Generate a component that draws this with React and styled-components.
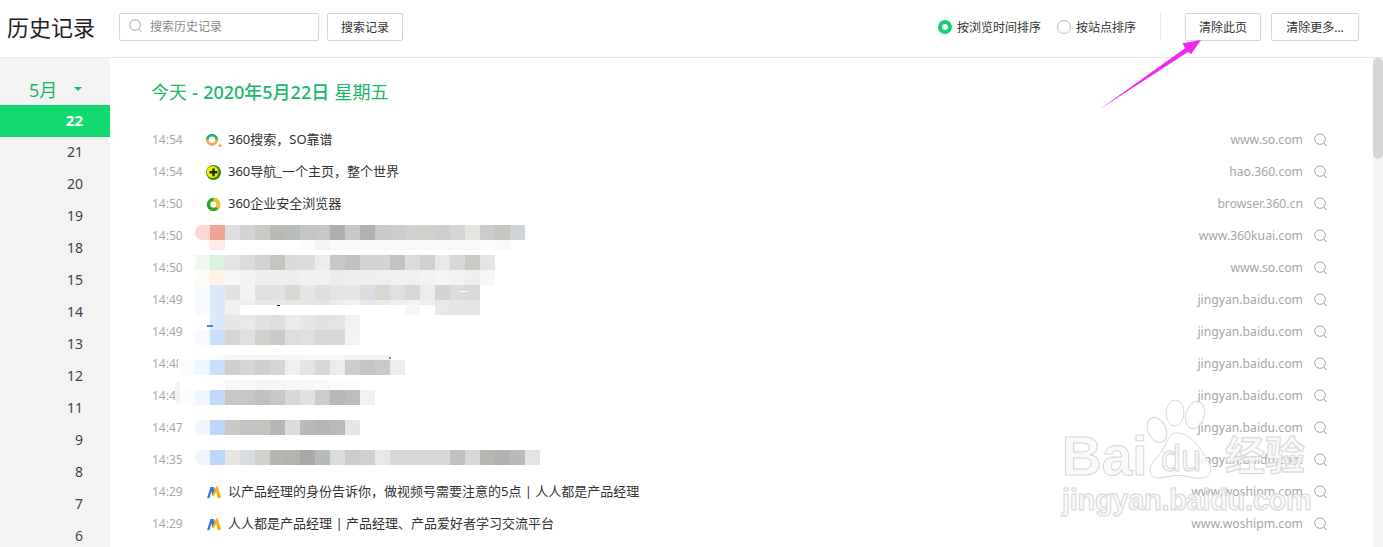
import React from "react";
import styled, { createGlobalStyle } from "styled-components";

const GlobalStyle = createGlobalStyle`
  html, body {
    margin: 0;
    padding: 0;
    height: 100%;
    background: #fff;
    overflow: hidden;
  }
  body {
    font-family: "Noto Sans", "Noto Sans CJK SC", sans-serif;
  }
`;

const Page = styled.div`
  position: relative;
  width: 1383px;
  height: 547px;
  overflow: hidden;
  display: flex;
  flex-direction: column;
`;

const Header = styled.header`
  flex: 0 0 58px;
  box-sizing: border-box;
  display: flex;
  align-items: center;
  padding: 0 24px 3px 7px;
  border-bottom: 1px solid #e8e8e8;
`;

const PageTitle = styled.h1`
  margin: 0 24px 0 0;
  font-size: 22px;
  font-weight: 400;
  line-height: 28px;
  color: #222;
`;

const SearchBox = styled.label`
  width: 200px;
  height: 28px;
  box-sizing: border-box;
  display: flex;
  align-items: center;
  gap: 8px;
  padding: 0 0 2px 9px;
  border: 1px solid #d6d6d6;
  border-radius: 2px;
  font-size: 12px;
  color: #8a8a8a;
`;

const Button = styled.button`
  height: 28px;
  width: ${(p) => p.$w}px;
  box-sizing: border-box;
  margin-left: ${(p) => p.$ml}px;
  padding: 0;
  border: 1px solid #d6d6d6;
  border-radius: 2px;
  background: #fff;
  font: inherit;
  font-size: 12px;
  color: #333;
`;

const SortGroup = styled.div`
  margin-left: auto;
  display: flex;
  align-items: center;
  gap: 16px;
`;

const SortOption = styled.span`
  display: flex;
  align-items: center;
  gap: 5px;
  font-size: 12px;
  color: #333;
`;

const Radio = styled.i`
  width: 14px;
  height: 14px;
  box-sizing: border-box;
  border-radius: 50%;
  border: ${(p) => (p.$on ? "4px solid #14d071" : "1px solid #bdbdbd")};
  background: #fff;
`;

const Divider = styled.span`
  width: 1px;
  height: 28px;
  margin-left: 24px;
  margin-right: 24px;
  background: #e8e8e8;
`;

const Body = styled.div`
  flex: 1;
  display: flex;
  min-height: 0;
`;

const Sidebar = styled.nav`
  flex: 0 0 110px;
  background: #f3f3f3;
  padding-top: 15px;
`;

const Month = styled.div`
  height: 32px;
  display: flex;
  align-items: center;
  padding: 0 0 1px 29px;
  box-sizing: border-box;
  font-size: 18px;
  color: #19b868;
`;

const Caret = styled.i`
  margin-left: 17px;
  width: 0;
  height: 0;
  border-left: 4px solid transparent;
  border-right: 4px solid transparent;
  border-top: 4px solid #19c06c;
`;

const Day = styled.div`
  height: 32px;
  line-height: 30px;
  padding-right: 27px;
  text-align: right;
  font-size: ${(p) => (p.$on ? 15 : 14)}px;
  font-weight: ${(p) => (p.$on ? 700 : 400)};
  color: ${(p) => (p.$on ? "#fff" : "#444")};
  background: ${(p) => (p.$on ? "#12d96f" : "transparent")};
`;

const Content = styled.main`
  flex: 1;
  min-width: 0;
  padding-top: 19px;
`;

const DayHeading = styled.h2`
  margin: 0 0 16px 41px;
  height: 31px;
  font-size: 18px;
  line-height: 31px;
  font-weight: 400;
  word-spacing: 0.5px;
  color: #19b868;
  b {
    font-weight: 500;
  }
`;

const Row = styled.div`
  position: relative;
  height: 32px;
  display: flex;
  align-items: center;
  padding: 0 46px 0 42px;
  font-size: 13px;
`;

const Time = styled.span`
  width: 54px;
  flex: none;
  margin-bottom: 1px;
  color: #a9a9a9;
  font-size: 12px;
`;

const Favicon = styled.span`
  flex: none;
  width: 14px;
  height: 14px;
  margin-right: 8px;
  display: flex;
  align-items: center;
  svg {
    flex: none;
    overflow: visible;
  }
`;

const Title = styled.span`
  margin-bottom: 3px;
  color: #333;
  white-space: nowrap;
`;

const Domain = styled.span`
  margin-left: auto;
  margin-bottom: 1px;
  color: #a6a6a6;
  font-size: 12.2px;
`;

const DomainSearch = styled.span`
  flex: none;
  display: flex;
  margin-left: 11px;
`;

const Mosaic = styled.div`
  position: absolute;
  left: ${(p) => p.$left}px;
  top: ${(p) => p.$top}px;
  padding-left: ${(p) => p.$lead || 0}px;
  background: ${(p) => p.$leadColor || "transparent"};
  border-radius: 7px 0 0 7px;
`;

const MosaicLine = styled.div`
  display: flex;
  height: ${(p) => p.$h}px;
`;

const MosaicCell = styled.i`
  flex: 0 0 15px;
  background: ${(p) => p.$c};
  &:first-child {
    border-radius: ${(p) => (p.$round ? "7px 0 0 7px" : "0")};
  }
`;

const Speck = styled.i`
  position: absolute;
  left: ${(p) => p.$x}px;
  top: ${(p) => p.$y}px;
  width: ${(p) => p.$w}px;
  height: ${(p) => p.$h}px;
  background: ${(p) => p.$c};
`;

const Track = styled.div`
  flex: 0 0 10px;
  background: #f4f4f4;
`;

const Thumb = styled.div`
  height: 101px;
  border-radius: 5px;
  background: #d6d6d6;
`;

const Arrow = styled.svg`
  position: absolute;
  left: 0;
  top: 0;
  pointer-events: none;
`;

const Watermark = styled.div`
  position: absolute;
  left: 1060px;
  top: 400px;
  width: 260px;
  height: 125px;
  pointer-events: none;
`;

const Paw = styled.svg`
  position: absolute;
  left: 80px;
  top: 0;
`;

const MarkText = styled.span`
  position: absolute;
  left: ${(p) => p.$x}px;
  top: ${(p) => p.$y}px;
  font-family: ${(p) => (p.$cjk ? '"Noto Sans CJK SC"' : '"Liberation Sans"')}, sans-serif;
  font-size: ${(p) => p.$size}px;
  font-weight: ${(p) => (p.$thin ? 400 : 700)};
  line-height: 1;
  letter-spacing: ${(p) => p.$track || 0}px;
  white-space: nowrap;
  color: rgba(255, 255, 255, 0.7);
  -webkit-text-stroke: 1px #d8d8d8;
  text-shadow: 0 0 2px rgba(200, 200, 200, 0.35);
`;

const SearchIcon = ({ size = 13, color = "#9a9a9a" }) => (
  <svg width={size} height={size + 1} viewBox="0 0 14 15" fill="none" stroke={color} strokeWidth="1">
    <circle cx="6.5" cy="6.5" r="5.7" />
    <path d="M10.6 10.8 13.4 14" />
  </svg>
);

const SoIcon = () => (
  <svg width="14" height="14" viewBox="0 0 14 14" fill="none" strokeWidth="2.8">
    <path d="M1.3 6.8A4.7 4.7 0 0 1 10.7 6.8" stroke="#18b56f" />
    <path d="M1.3 6.8A4.7 4.7 0 0 0 10.7 6.8" stroke="#f7a64a" />
    <circle cx="14" cy="12.6" r="1.4" fill="#f09a50" stroke="none" />
  </svg>
);

const HaoIcon = () => (
  <svg width="15" height="15" viewBox="0 0 15 15">
    <circle cx="7.5" cy="7.5" r="7.5" fill="#2f8a12" />
    <circle cx="6.6" cy="7" r="6" fill="#f6ea12" />
    <path d="M6.3 3.4h2.4v2.7h2.7v2.4H8.7v2.7H6.3V8.5H3.6V6.1h2.7z" fill="#12340c" />
  </svg>
);

const BrowserIcon = () => (
  <svg width="15" height="15" viewBox="0 0 15 15" fill="none" strokeWidth="3.6">
    <circle cx="7.5" cy="7.5" r="5" stroke="#2fa52a" />
    <path d="M7.5 2.5A5 5 0 0 1 11 11" stroke="#f2c521" />
  </svg>
);

const WoshipmIcon = () => (
  <svg width="15" height="14" viewBox="0 0 15 14">
    <path d="M1 13 4.6 2h3.2l1.6 4-3 5-1-4.4L3.6 13z" fill="#2c83d6" />
    <path d="M6 11 10.4 1l1.6.4L15 13h-3.6l-1.2-6.2L7.6 11z" fill="#fbae17" />
  </svg>
);

const days = [22, 21, 20, 19, 18, 15, 14, 13, 12, 11, 9, 8, 7, 6];

const cells = (s) => s.split(" ").map((c) => "#" + c);

const rows = [
  { time: "14:54", icon: <SoIcon />, title: "360搜索，SO靠谱", domain: "www.so.com" },
  { time: "14:54", icon: <HaoIcon />, title: "360导航_一个主页，整个世界", domain: "hao.360.com" },
  { time: "14:50", icon: <BrowserIcon />, title: "360企业安全浏览器", domain: "browser.360.cn" },
  {
    time: "14:50",
    domain: "www.360kuai.com",
    mosaic: {
      left: 85,
      top: 5,
      round: true,
      lines: [
        [15, "fbd9d4 f0a498 dfdfdf d3d3d3 cbcac7 bbb9b6 b9bcbc c4c4c3 c6c6c6 b2aeae c6c8c7 b1b2b3 c8cacb cdccca d0d2d0 d2d0cc cdced0 d4d6d8 e6e5e0 cbcbcd c6c5c0 d0d4d7"],
        [10, "fff fde9e6 fff fff fff fff fff fcfcfc f3f3f3 fafafa fafafa fafafa f9f9f9 f9f9f9 f8f8f8 f8f8f6 f8f8f6 f8f8f6 fafafa fcfcfc f8f8f8 fff"],
      ],
    },
  },
  {
    time: "14:50",
    domain: "www.so.com",
    mosaic: {
      left: 85,
      top: 3,
      lines: [
        [15, "eef8f0 dcf0e2 e4e4e4 dcdcdc d4d3d2 c5c4c1 dadbda dcdddb ececec c8c8c8 c0c1c2 d4d2d2 d3d4d3 c2c2c1 dcdcde d2d1d0 e8e8e6 d8d8d8 cbc9c6 e4e4e6"],
        [15, "fefbf6 fff2e6 f7f7f7 f2f2f2 eeeeee ededed eeeeee f0f0f0 f0f0f0 ebebeb eeeeee eeeeee efefef f0f0f0 f0f0f0 f2f2f2 f4f4f4 f2f2f2 eeeeee f6f6f6"],
      ],
    },
  },
  {
    time: "14:49",
    domain: "jingyan.baidu.com",
    mosaic: {
      left: 85,
      top: 1,
      specks: [
        { x: 82, y: 20, w: 3, h: 1, c: "#222" },
        { x: 264, y: 6, w: 9, h: 1, c: "#fff" },
      ],
      lines: [
        [15, "f6f9fe dce9fc e2e2e0 f2f2f2 e0e2e0 e4e2e0 d8d8d5 e6e6e4 e0dfdf e4e4e4 e4e4e2 dcdde0 d8d7d4 e0e0e0 d8d8d8 ececea d4d4d4 dcdcdc dadada"],
        [5, "f6f9fe dce9fc f0f0f0 eeeeee e8e8e8 e8e8e8 e6e6e6 e6e6e6 e4e4e4 ececec f0f0f0 e8e8e8 eaeaea eeeeee f2f2f2 eeeeee e8e8e8 e6e6e6 e4e4e4"],
        [10, "f6f9fe dce9fc f0f0f0 fff fff fff fff fff fff fff fff fff fff fff f6f6f6 fff e8e8e8 e6e6e6 e4e4e4"],
      ],
    },
  },
  {
    time: "14:49",
    domain: "jingyan.baidu.com",
    mosaic: {
      left: 85,
      top: -1,
      specks: [{ x: 12, y: 10, w: 6, h: 2, c: "#3f8cf0" }],
      lines: [
        [15, "fff dce9fc e6e6e4 e8e8e8 e2e2e2 dedede eaebed e6e6e4 e2e2e0 e4e4e2 f0f2f2"],
        [15, "f6f9fe c9dffc d6d4d4 e0e0e0 d0d1cb c8cbc8 dcdee2 e0e0dd d8d6d6 d8d8d8 f2f3f4"],
      ],
    },
  },
  {
    time: "14:48",
    domain: "jingyan.baidu.com",
    mosaic: {
      left: 68,
      top: 7,
      lead: 2,
      leadColor: "#fff",
      specks: [{ x: 211, y: 2, w: 2, h: 2, c: "#3f8cf0" }],
      lines: [
        [5, "fff fff f8fbff f4f4f2 f4f4f2 f4f4f2 f4f4f2 f6f6f4 f8f8f8 f8f8f8 f8f8f8 f2f2f0 f2f2f0 f2f2f0 fff"],
        [15, "fafbfc eff6fe c9dffd d0cfcc d4d6d3 cfcfcd d4d6d8 f0eeee e4e4e4 d8d8d8 ebedec cecbc9 c5c3c6 c9c9c9 ebeded"],
      ],
    },
  },
  {
    time: "14:47",
    domain: "jingyan.baidu.com",
    mosaic: {
      left: 65,
      top: 0,
      lead: 5,
      leadColor: "#f4f2ef",
      lines: [
        [10, "fff fff fff f6f6f6 f6f6f6 f5f5f5 f5f5f5 f6f6f6 f6f6f6 f8f8f8 fcfcfc fcfcfc fff"],
        [15, "fbfcfe f0f6fe c0d8fc c8c6c6 c6c6c6 c0c0c0 c8c6c8 d8d8d8 e0e2e0 cfcac7 b8b8ba bdbdbd f0f1f2"],
      ],
    },
  },
  {
    time: "14:47",
    domain: "jingyan.baidu.com",
    mosaic: {
      left: 85,
      top: 8,
      round: true,
      lines: [[15, "f0f6fe bdd6fb cac8c5 c0c3c0 c2c2be b6b6b6 dcdcdc bcbab7 b8b5b5 bbbbbb e6e7e8"]],
    },
  },
  {
    time: "14:35",
    domain: "jingyan.baidu.com",
    mosaic: {
      left: 85,
      top: 6,
      round: true,
      lines: [[15, "f0f6fe bdd6fb e8e6e0 d8dde0 d2d1cd b5b5b3 b4b4ac a9a9a8 b6bbbb dcdcda cccccc d0d0d0 e8e8e8 d8d8d8 d8d8d8 d8d8d8 d8d8d8 c0c0c0 d8d8da b8b6b3 b2b0b0 bababa e4e4e6"]],
    },
  },
  {
    time: "14:29",
    icon: <WoshipmIcon />,
    title: "以产品经理的身份告诉你，做视频号需要注意的5点 | 人人都是产品经理",
    domain: "www.woshipm.com",
  },
  {
    time: "14:29",
    icon: <WoshipmIcon />,
    title: "人人都是产品经理 | 产品经理、产品爱好者学习交流平台",
    domain: "www.woshipm.com",
  },
];

function HistoryRow({ row }) {
  const { time, icon, title, domain, mosaic } = row;
  return (
    <Row>
      <Time>{time}</Time>
      {icon && <Favicon>{icon}</Favicon>}
      {title && <Title>{title}</Title>}
      <Domain>{domain}</Domain>
      <DomainSearch>
        <SearchIcon />
      </DomainSearch>
      {mosaic && (
        <Mosaic $left={mosaic.left} $top={mosaic.top} $lead={mosaic.lead} $leadColor={mosaic.leadColor}>
          {mosaic.lines.map(([h, line], i) => (
            <MosaicLine key={i} $h={h}>
              {cells(line).map((c, j) => (
                <MosaicCell key={j} $c={c} $round={mosaic.round} />
              ))}
            </MosaicLine>
          ))}
          {(mosaic.specks || []).map((s, i) => (
            <Speck key={i} $x={s.x} $y={s.y} $w={s.w} $h={s.h} $c={s.c} />
          ))}
        </Mosaic>
      )}
    </Row>
  );
}

export default function App() {
  return (
    <Page>
      <GlobalStyle />
      <Header>
        <PageTitle>历史记录</PageTitle>
        <SearchBox>
          <SearchIcon size={13} color="#a0a0a0" />
          搜索历史记录
        </SearchBox>
        <Button $w={76} $ml={8}>搜索记录</Button>
        <SortGroup>
          <SortOption>
            <Radio $on />
            按浏览时间排序
          </SortOption>
          <SortOption>
            <Radio />
            按站点排序
          </SortOption>
        </SortGroup>
        <Divider />
        <Button $w={76} $ml={0}>清除此页</Button>
        <Button $w={88} $ml={10}>清除更多...</Button>
      </Header>
      <Body>
        <Sidebar>
          <Month>
            5月
            <Caret />
          </Month>
          {days.map((d, i) => (
            <Day key={d} $on={i === 0}>{d}</Day>
          ))}
        </Sidebar>
        <Content>
          <DayHeading>
            今天 <b>- 2020年5月22日</b> 星期五
          </DayHeading>
          {rows.map((row, i) => (
            <HistoryRow key={i} row={row} />
          ))}
        </Content>
        <Track>
          <Thumb />
        </Track>
      </Body>
      <Watermark>
        <Paw width="100" height="90" viewBox="0 0 100 90" fill="rgba(255,255,255,0.7)" stroke="#d8d8d8">
          <ellipse cx="17" cy="30" rx="9" ry="13" transform="rotate(-25 17 30)" />
          <ellipse cx="35" cy="13" rx="9" ry="13" />
          <ellipse cx="55" cy="15" rx="9" ry="14" transform="rotate(15 55 15)" />
          <path d="M37 33c10 0 18 8 24 17 6 9 12 16 9 23-3 6-10 6-20 4-8-2-16-2-24 0-9 2-15 1-16-6-1-8 7-12 12-20 5-9 7-18 15-18z" />
        </Paw>
        <MarkText $x={2} $y={29} $size={55}>Bai</MarkText>
        <MarkText $x={101} $y={41} $size={36} $thin>du</MarkText>
        <MarkText $x={165} $y={33} $size={40} $cjk>经验</MarkText>
        <MarkText $x={2} $y={86} $size={29} $track={-0.3}>jingyan.baidu.com</MarkText>
      </Watermark>
      <Arrow width="1383" height="547" viewBox="0 0 1383 547">
        <polygon points="1100,109 1185,48.3 1182.7,43.3 1201,40 1191,54.3 1188.3,51.7" fill="#f028f0" />
      </Arrow>
    </Page>
  );
}
